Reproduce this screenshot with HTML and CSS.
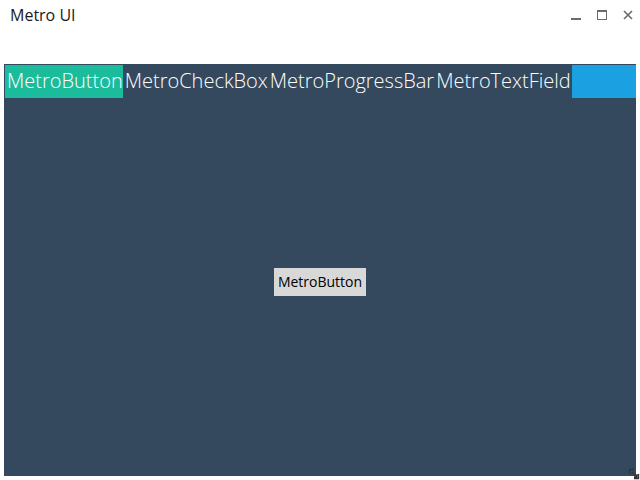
FILE: index.html
```html
<!DOCTYPE html>
<html>
<head>
<meta charset="utf-8">
<link rel="stylesheet" href="styles.css">
</head>
<body>
<div class="window">
  <div class="titlebar">
    <div class="title">Metro UI</div>
    <div class="controls">
      <svg class="ctl" width="12" height="12" viewBox="0 0 12 12"><rect x="1" y="9" width="10" height="2" fill="#6b6b6b"/></svg>
      <svg class="ctl" width="12" height="12" viewBox="0 0 12 12"><rect x="1.5" y="1.5" width="9" height="9" fill="none" stroke="#6b6b6b" stroke-width="1"/><rect x="1" y="1" width="10" height="2" fill="#6b6b6b"/></svg>
      <svg class="ctl" width="12" height="12" viewBox="0 0 12 12"><path d="M2 2 L10 10 M10 2 L2 10" stroke="#6b6b6b" stroke-width="1.6"/></svg>
    </div>
  </div>
  <div class="panel">
    <div class="tabs">
      <div class="tab active">MetroButton</div>
      <div class="tab">MetroCheckBox</div>
      <div class="tab">MetroProgressBar</div>
      <div class="tab">MetroTextField</div>
      <div class="fill"></div>
    </div>
    <div class="content">
      <div class="button">MetroButton</div>
    </div>
  </div>
  <svg class="grip" width="12" height="12" viewBox="0 0 12 12"><path d="M1.5 6 L1.5 1.5 L6 1.5 M10.5 6 L10.5 10.5 L6 10.5 M4 4 L9 9 M9 6 L9 9 L6 9" stroke="#333" stroke-width="1.3" fill="none"/></svg>
</div>
</body>
</html>
```
FILE: styles.css
```css
html, body {
  margin: 0;
  padding: 0;
  background: #ffffff;
  font-family: "Open Sans", "Noto Sans", sans-serif;
}
.window {
  position: relative;
  width: 640px;
  height: 480px;
  display: flex;
  flex-direction: column;
}
.titlebar {
  height: 64px;
  display: flex;
  justify-content: space-between;
  align-items: flex-start;
}
.title {
  font-size: 16px;
  color: #1a1a1a;
  margin: 4px 0 0 10px;
  line-height: 22px;
}
.controls {
  display: flex;
  gap: 14px;
  margin: 9px 6px 0 0;
}
.panel {
  margin: 0 4px;
  height: 412px;
  background: #34495e;
  display: flex;
  flex-direction: column;
}
.tabs {
  display: flex;
  height: 33px;
  padding: 1px 0 0 1px;
}
.tab {
  color: #ffffff;
  font-size: 20px;
  font-weight: 300;
  line-height: 32px;
  padding: 0 0 0 2px;
  white-space: nowrap;
}
.tab.active {
  background: #1abc9c;
}
.fill {
  flex: 1;
  background: #1ba1e2;
  margin-left: 1px;
}
.content {
  flex: 1;
  display: flex;
  justify-content: center;
  align-items: center;
}
.button {
  background: #d8d8d8;
  color: #000000;
  font-size: 14px;
  line-height: 28px;
  padding: 0 4px;
  margin-top: -11px;
}
.grip {
  position: absolute;
  right: 0;
  bottom: 0;
}
```
